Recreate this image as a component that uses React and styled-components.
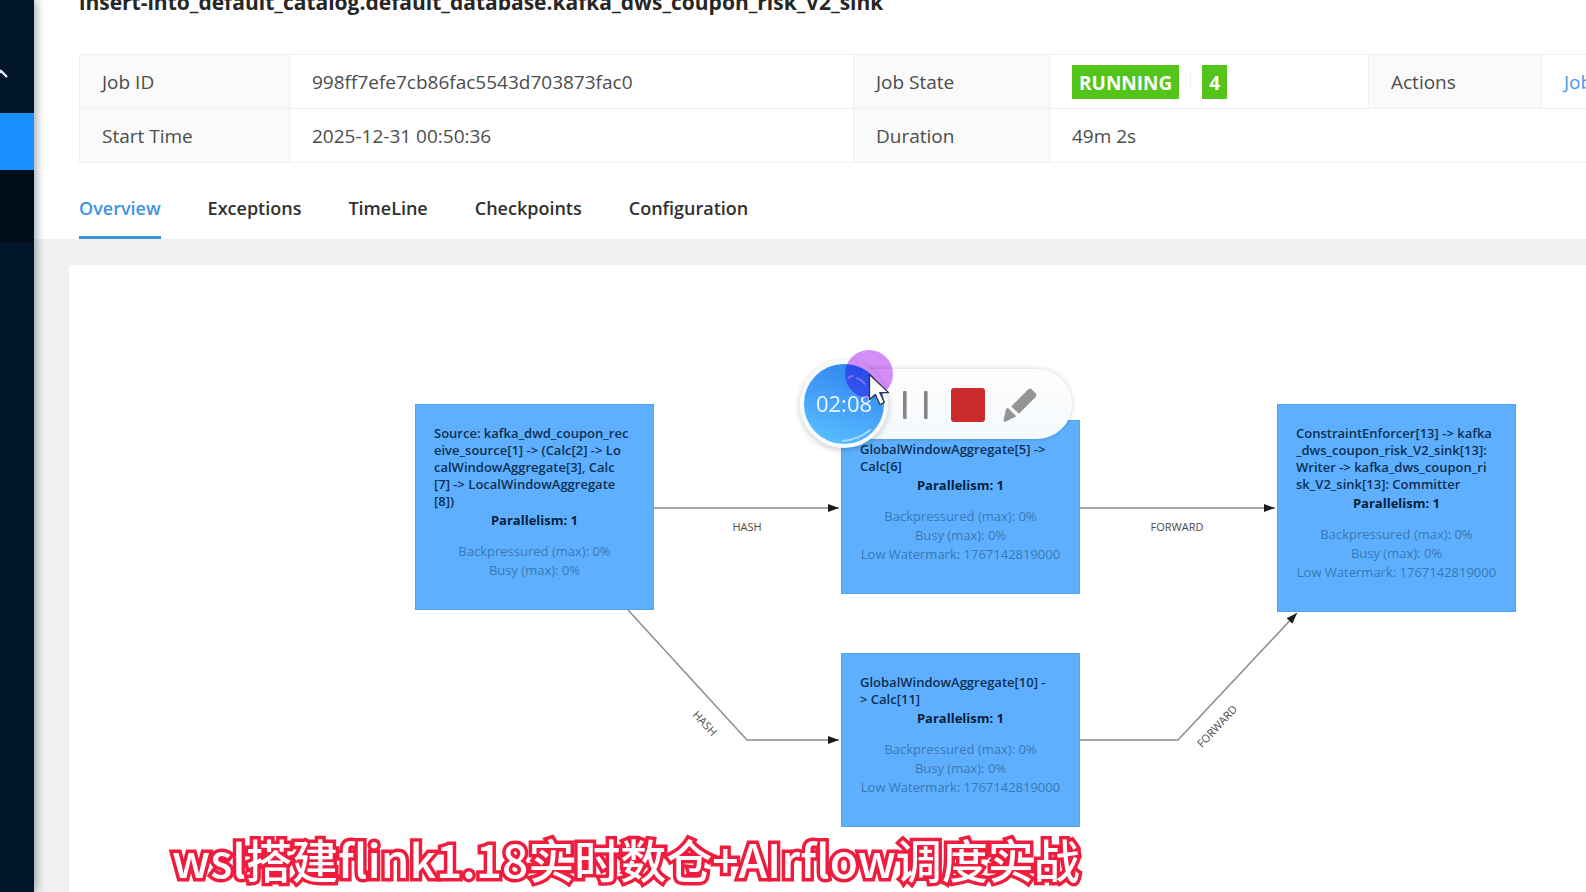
import { useState } from "react";
import styled, { createGlobalStyle, css } from "styled-components";

const tabs = [
  "Overview",
  "Exceptions",
  "TimeLine",
  "Checkpoints",
  "Configuration",
];

const nodes = [
  {
    id: "source",
    x: 346,
    y: 139,
    name: "Source: kafka_dwd_coupon_rec\neive_source[1] -> (Calc[2] -> Lo\ncalWindowAggregate[3], Calc\n[7] -> LocalWindowAggregate\n[8])",
    metrics: ["Backpressured (max): 0%", "Busy (max): 0%"],
  },
  {
    id: "window-5",
    x: 772,
    y: 155,
    name: "GlobalWindowAggregate[5] ->\nCalc[6]",
    metrics: [
      "Backpressured (max): 0%",
      "Busy (max): 0%",
      "Low Watermark: 1767142819000",
    ],
  },
  {
    id: "window-10",
    x: 772,
    y: 388,
    name: "GlobalWindowAggregate[10] -\n> Calc[11]",
    metrics: [
      "Backpressured (max): 0%",
      "Busy (max): 0%",
      "Low Watermark: 1767142819000",
    ],
  },
  {
    id: "sink",
    x: 1208,
    y: 139,
    name: "ConstraintEnforcer[13] -> kafka\n_dws_coupon_risk_V2_sink[13]:\nWriter -> kafka_dws_coupon_ri\nsk_V2_sink[13]: Committer",
    metrics: [
      "Backpressured (max): 0%",
      "Busy (max): 0%",
      "Low Watermark: 1767142819000",
    ],
  },
];

const edges = [
  { id: "e1", points: "585,243 770,243", label: "HASH", x: 678, y: 266, turn: 0 },
  {
    id: "e2",
    points: "559,345 678,475 770,475",
    label: "HASH",
    x: 633,
    y: 461,
    turn: 47,
  },
  {
    id: "e3",
    points: "1011,243 1206,243",
    label: "FORWARD",
    x: 1108,
    y: 266,
    turn: 0,
  },
  {
    id: "e4",
    points: "1011,475 1109,475 1228,348",
    label: "FORWARD",
    x: 1151,
    y: 464,
    turn: -47,
  },
];

const App = () => {
  const [activeTab, setActiveTab] = useState("Overview");

  return (
    <>
      <GlobalStyle />
      <StLayout>
        <StSider>
          <StSubMenuTitle aria-label="Toggle jobs menu">
            <svg width="18" height="10" viewBox="0 0 18 10">
              <path
                d="M3 8 L9 2 L15 8"
                fill="none"
                stroke="#e6eaee"
                strokeWidth="2.4"
              />
            </svg>
          </StSubMenuTitle>
          <StSubMenu>
            <StMenuItem href="#running" aria-label="Running jobs" $selected />
            <StMenuItem href="#completed" aria-label="Completed jobs" />
          </StSubMenu>
        </StSider>

        <StMain>
          <StHeader>
            <StTitle>
              insert-into_default_catalog.default_database.kafka_dws_coupon_risk_V2_sink
            </StTitle>
            <StDescriptions>
              <colgroup>
                <StCol $width={210} />
                <StCol $width={564} />
                <StCol $width={196} />
                <StCol $width={319} />
                <StCol $width={173} />
                <StCol $width={280} />
              </colgroup>
              <tbody>
                <tr>
                  <StLabel scope="row">Job ID</StLabel>
                  <StValue>998ff7efe7cb86fac5543d703873fac0</StValue>
                  <StLabel scope="row">Job State</StLabel>
                  <StValue>
                    <StState>
                      <StTag>RUNNING</StTag>
                      <StDivider />
                      <StTag>4</StTag>
                    </StState>
                  </StValue>
                  <StLabel scope="row">Actions</StLabel>
                  <StValue>
                    <StLink href="#log">Job Manager Log</StLink>
                  </StValue>
                </tr>
                <tr>
                  <StLabel scope="row">Start Time</StLabel>
                  <StValue>2025-12-31 00:50:36</StValue>
                  <StLabel scope="row">Duration</StLabel>
                  <StValue colSpan={3}>49m 2s</StValue>
                </tr>
              </tbody>
            </StDescriptions>
            <StTabs>
              {tabs.map((tab) => (
                <StTab
                  key={tab}
                  $active={tab === activeTab}
                  onClick={() => setActiveTab(tab)}
                >
                  {tab}
                </StTab>
              ))}
            </StTabs>
          </StHeader>

          <StGraph>
            <StEdges>
              <defs>
                <marker
                  id="arrow"
                  viewBox="0 0 11 8"
                  refX="11"
                  refY="4"
                  markerWidth="11"
                  markerHeight="8"
                  markerUnits="userSpaceOnUse"
                  orient="auto"
                >
                  <path d="M0 0 L11 4 L0 8 Z" fill="#1c1c1c" />
                </marker>
              </defs>
              {edges.map((edge) => (
                <g key={edge.id}>
                  <polyline
                    points={edge.points}
                    fill="none"
                    stroke="#8c8c8c"
                    strokeWidth="1.5"
                    markerEnd="url(#arrow)"
                  />
                  <StEdgeLabel
                    x={edge.x}
                    y={edge.y}
                    transform={`rotate(${edge.turn} ${edge.x} ${edge.y})`}
                  >
                    {edge.label}
                  </StEdgeLabel>
                </g>
              ))}
            </StEdges>
            {nodes.map((node) => (
              <StNode key={node.id} style={{ left: node.x, top: node.y }}>
                <StNodeName>{node.name}</StNodeName>
                <StParallelism>Parallelism: 1</StParallelism>
                <StMetrics>
                  {node.metrics.map((metric) => (
                    <li key={metric}>{metric}</li>
                  ))}
                </StMetrics>
              </StNode>
            ))}
          </StGraph>
        </StMain>
      </StLayout>

      <StRecorder>
        <StTimer>
          <StShine viewBox="0 0 80 80" fill="none" strokeLinecap="round">
            <path d="M39 77 Q56 75 66 66" stroke="#a5dcff" strokeWidth="2" />
            <path d="M44 14 Q46 12 49 12" stroke="#a9d4ff" strokeWidth="1.5" />
            <path d="M53 14 Q58 16 61 20" stroke="#a9d4ff" strokeWidth="1.5" />
          </StShine>
          02:08
        </StTimer>
        <StRecorderBar>
          <StRecorderButton aria-label="Pause">
            <svg width="34" height="34" viewBox="0 0 34 34" fill="#858585">
              <rect x="4" y="3" width="3.6" height="28" rx="1" />
              <rect x="25" y="3" width="3.6" height="28" rx="1" />
            </svg>
          </StRecorderButton>
          <StRecorderButton aria-label="Stop">
            <svg width="34" height="34" viewBox="0 0 34 34">
              <rect width="34" height="34" rx="3" fill="#cb2a2a" />
            </svg>
          </StRecorderButton>
          <StRecorderButton aria-label="Draw">
            <svg width="34" height="34" viewBox="0 0 34 34" fill="#949494">
              <path d="M8.2 18.6 L24.6 2 Q27 -0.4 29.4 2 L32.2 4.8 Q34.4 7 32.2 9.4 L16 25.8 Z" />
              <path d="M5.6 20.6 L13.2 28.2 L3 33.6 Q0 34.6 0.6 31.4 L3 21.6 Q3.8 19 5.6 20.6 Z" />
            </svg>
          </StRecorderButton>
        </StRecorderBar>
      </StRecorder>

      <StClickHalo />
      <StCursor width="24" height="34" viewBox="0 0 24 34">
        <path
          d="M1.5 1.5 L1.5 26.5 L7.2 21.4 L12 31.5 L16.4 29.4 L11.8 19.6 L20.5 19.6 Z"
          fill="#fff"
          stroke="#33304a"
          strokeWidth="1.3"
          strokeLinejoin="round"
        />
      </StCursor>

      <StCaption>wsl搭建flink1.18实时数仓+AIrflow调度实战</StCaption>
    </>
  );
};

export default App;

const GlobalStyle = createGlobalStyle`
  * {
    box-sizing: border-box;
  }

  body {
    margin: 0;
    overflow: hidden;
    background: #f0f0f0;
    color: #4c4c4c;
    font-family: "Open Sans", "Noto Sans", sans-serif;
    font-size: 19px;
  }

  button {
    border: 0;
    padding: 0;
    background: none;
    font: inherit;
    cursor: pointer;
  }
`;

const StLayout = styled.div`
  display: flex;
  height: 100vh;
  overflow: hidden;
`;

const StSider = styled.nav`
  position: relative;
  z-index: 1;
  flex: none;
  width: 34px;
  background: #001529;
  box-shadow: 2px 0 9px rgba(0, 21, 41, 0.4);
`;

const StSubMenuTitle = styled.button`
  display: flex;
  justify-content: flex-start;
  align-items: center;
  width: 100%;
  height: 113px;
  padding-top: 34px;

  svg {
    margin-left: -8px;
  }
`;

const StSubMenu = styled.div`
  height: 129px;
  background: #000c17;
`;

const StMenuItem = styled.a`
  display: block;
  height: 57px;
  background: ${({ $selected }) => ($selected ? "#1890ff" : "transparent")};
`;

const StMain = styled.main`
  display: flex;
  flex: 1;
  flex-direction: column;
  min-width: 0;
`;

const StHeader = styled.header`
  flex: none;
  overflow: hidden;
  padding-left: 45px;
  background: #fff;
`;

const StTitle = styled.h1`
  margin: -13px 0 37px;
  color: #262626;
  font-size: 21px;
  font-weight: 700;
  line-height: 30px;
  white-space: nowrap;
`;

const StDescriptions = styled.table`
  width: 1742px;
  border-collapse: collapse;
  table-layout: fixed;
`;

const StCol = styled.col`
  width: ${({ $width }) => $width}px;
`;

const cell = css`
  height: 54px;
  border: 1px solid #f0f0f0;
  padding: 0 22px;
  font-weight: 400;
  line-height: 32px;
  text-align: left;
  white-space: nowrap;
`;

const StLabel = styled.th`
  ${cell}
  background: #fafafa;
`;

const StValue = styled.td`
  ${cell}
`;

const StState = styled.div`
  display: flex;
  align-items: center;
`;

const StTag = styled.span`
  height: 34px;
  padding: 0 7px;
  background: #52c41a;
  color: #fff;
  font-weight: 700;
  line-height: 36px;
`;

const StDivider = styled.span`
  width: 1px;
  height: 19px;
  margin: 0 11px;
  background: #f0f0f0;
`;

const StLink = styled.a`
  color: #4a9be8;
  text-decoration: none;
`;

const StTabs = styled.div`
  display: flex;
  gap: 47px;
  margin-top: 13px;
`;

const StTab = styled.button`
  height: 63px;
  padding-top: 3px;
  border-bottom: 3px solid
    ${({ $active }) => ($active ? "#3f93d6" : "transparent")};
  color: ${({ $active }) => ($active ? "#3d94e0" : "#303030")};
  font-size: 18px;
  font-weight: 600;
`;

const StGraph = styled.section`
  position: relative;
  flex: 1;
  margin: 26px 0 0 35px;
  overflow: hidden;
  background: #fff;
`;

const StEdges = styled.svg`
  position: absolute;
  inset: 0;
  width: 100%;
  height: 100%;
`;

const StEdgeLabel = styled.text`
  fill: #4a4a4a;
  font-size: 11px;
  text-anchor: middle;
`;

const StNode = styled.article`
  position: absolute;
  width: 239px;
  padding: 21px 19px 30px;
  background: #5eb0ff;
  box-shadow: inset 0 0 0 1px #4fa3f2;
  font-size: 13px;
`;

const StNodeName = styled.div`
  color: #0d2f52;
  font-weight: 600;
  line-height: 17px;
  white-space: pre;
`;

const StParallelism = styled.div`
  color: #08213d;
  font-weight: 700;
  line-height: 20px;
  text-align: center;
`;

const StMetrics = styled.ul`
  display: flex;
  flex-direction: column;
  align-items: center;
  margin: 12px 0 0;
  padding: 0;
  color: #3a78b4;
  line-height: 19px;
  list-style: none;
  white-space: nowrap;
`;

const StRecorder = styled.div`
  position: fixed;
  z-index: 2;
  top: 360px;
  left: 800px;
  display: flex;
  align-items: center;
`;

const StTimer = styled.div`
  position: relative;
  z-index: 1;
  width: 88px;
  height: 88px;
  border: 4px solid #f6fbff;
  border-radius: 50%;
  background: linear-gradient(200deg, #2f86ee 10%, #45a0f8 50%, #58bdfd 90%);
  box-shadow: 0 2px 6px rgba(0, 0, 0, 0.22);
  color: #eaf6ff;
  font-size: 22px;
  line-height: 78px;
  text-align: center;
`;

const StShine = styled.svg`
  position: absolute;
  inset: 0;
`;

const StRecorderBar = styled.div`
  display: flex;
  gap: 18px;
  align-items: center;
  height: 70px;
  margin-left: -44px;
  padding: 2px 35px 0 55px;
  border-radius: 0 35px 35px 0;
  background: linear-gradient(#fdfdfd, #f5f9fd);
  box-shadow: 0 0 5px rgba(0, 0, 0, 0.2);
`;

const StRecorderButton = styled.button`
  width: 34px;
  height: 34px;

  svg {
    display: block;
  }
`;

const StClickHalo = styled.div`
  position: fixed;
  z-index: 3;
  top: 350px;
  left: 845px;
  width: 48px;
  height: 48px;
  border-radius: 50%;
  background: #d68ef8;
  mix-blend-mode: multiply;
`;

const StCursor = styled.svg`
  position: fixed;
  z-index: 4;
  top: 373px;
  left: 868px;
`;

const StCaption = styled.p`
  position: fixed;
  z-index: 5;
  bottom: 4px;
  left: 172px;
  margin: 0;
  color: #fff;
  font-family: "Noto Sans CJK SC", sans-serif;
  font-size: 46px;
  font-weight: 500;
  line-height: 60px;
  white-space: nowrap;
  paint-order: stroke fill;
  -webkit-text-stroke: 7px #f01c3e;
`;
